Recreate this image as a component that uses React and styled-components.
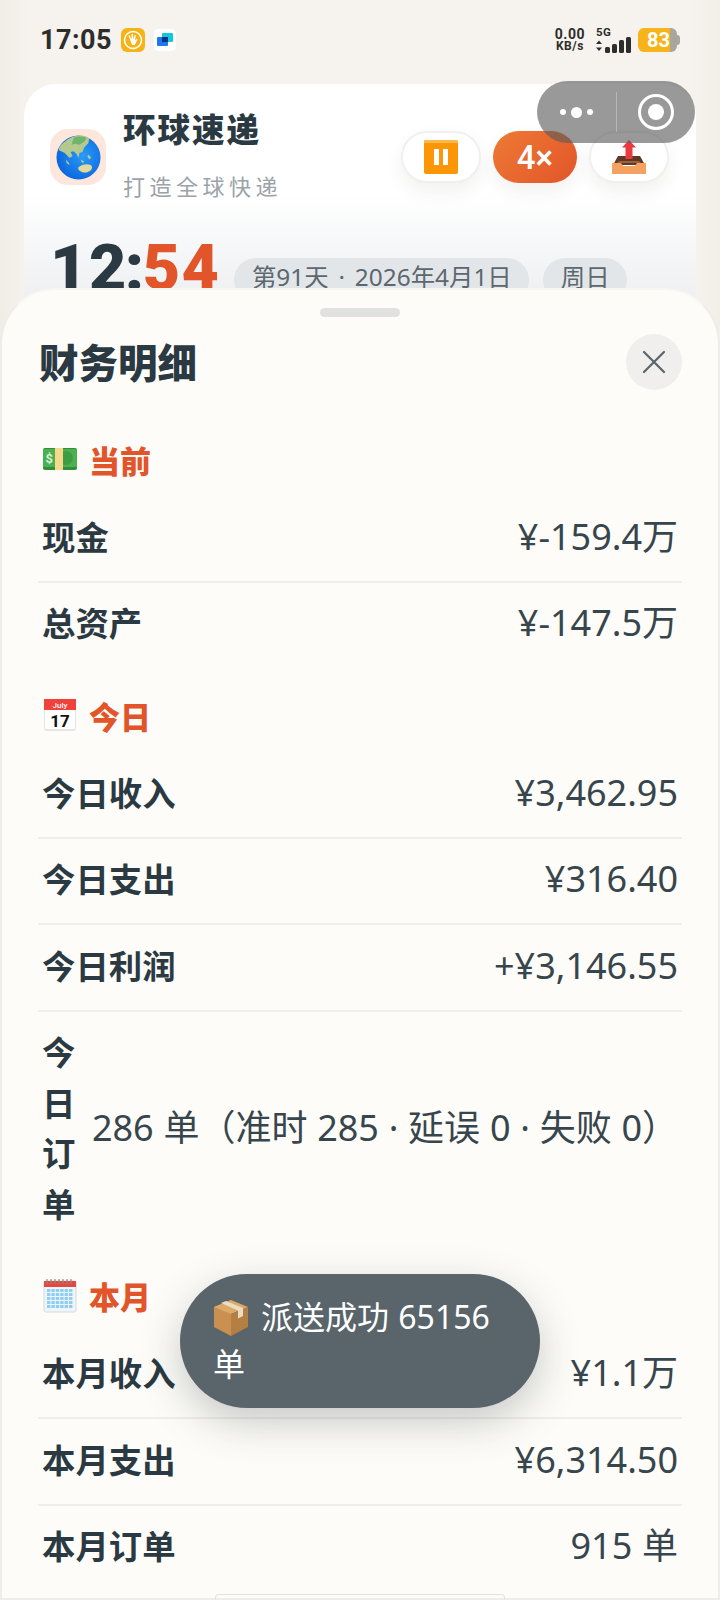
import React from "react";
import styled, { createGlobalStyle } from "styled-components";

const FONT = `"Noto Sans", "Noto Sans CJK SC", sans-serif`;

const Global = createGlobalStyle`
  html, body { margin: 0; padding: 0; background: #f5f2ec; }
  * { box-sizing: border-box; }
`;

const Page = styled.div`
  position: relative;
  width: 720px;
  height: 1600px;
  overflow: hidden;
  font-family: ${FONT};
  background: linear-gradient(90deg, #f0ede7 0, #f6f3ee 30px, #f6f3ee 690px, #f2efe9 100%);
  color: #2b3a42;
`;

const StatusBar = styled.div`
  height: 84px;
  padding: 24px 40px 0 40px;
  display: flex;
  justify-content: space-between;
  align-items: flex-start;
`;
const StatusLeft = styled.div`
  display: flex;
  align-items: center;
  gap: 9px;
  height: 32px;
`;
const Clock = styled.span`
  font-family: "Roboto", sans-serif;
  font-weight: 700;
  font-size: 27px;
  letter-spacing: 0.5px;
  color: #2d2d2b;
`;
const StatusRight = styled.div`
  display: flex;
  align-items: center;
  height: 32px;
`;
const Speed = styled.div`
  font-family: "Roboto", sans-serif;
  font-weight: 700;
  font-size: 12px;
  line-height: 12.5px;
  text-align: center;
  color: #2d2d2b;
  margin-right: 11px;
  letter-spacing: 0.5px;
  span { display: block; }
  span:first-child { font-size: 14px; }
`;
const Net = styled.div`
  display: flex;
  flex-direction: column;
  font-family: "Roboto", sans-serif;
  font-weight: 700;
  font-size: 11.5px;
  line-height: 9px;
  letter-spacing: 0.4px;
  color: #2d2d2b;
  margin-right: 7px;
`;
const Battery = styled.div`
  position: relative;
  width: 39px;
  height: 24px;
  border-radius: 6px;
  margin-right: 3px;
  background: linear-gradient(90deg, #f6b41a 0 32px, #a9a69f 32px);
  color: #fff;
  font-family: "Roboto", sans-serif;
  font-weight: 700;
  font-size: 20px;
  line-height: 24px;
  padding-left: 9px;
  &::after {
    content: "";
    position: absolute;
    right: -3px;
    top: 7px;
    width: 3px;
    height: 10px;
    border-radius: 0 3px 3px 0;
    background: #a9a69f;
  }
`;

const Card = styled.div`
  margin: 0 24px;
  height: 320px;
  border-radius: 32px 32px 0 0;
  background: linear-gradient(180deg, #fff 0, #fff 110px, #eef0f2 210px);
  padding: 22px 26px 0;
`;
const CardHead = styled.div`
  display: flex;
  align-items: flex-start;
`;
const Logo = styled.div`
  width: 56px;
  height: 56px;
  border-radius: 18px;
  background: #fde6db;
  display: flex;
  align-items: center;
  justify-content: center;
  margin-top: 23px;
`;
const Brand = styled.div`
  margin-left: 17px;
  flex: 1;
`;
const BrandName = styled.div`
  font-size: 32.5px;
  font-weight: 900;
  letter-spacing: 2px;
  line-height: 48px;
  color: #2b3a42;
`;
const BrandSub = styled.div`
  font-size: 22px;
  letter-spacing: 4.5px;
  line-height: 32px;
  margin-top: 16px;
  color: #9aa3a8;
`;
const Controls = styled.div`
  display: flex;
  gap: 12px;
  margin: 25px 1px 0 0;
`;
const Ctrl = styled.div`
  width: ${(p) => p.$w}px;
  height: 52px;
  border-radius: 26px;
  display: flex;
  align-items: center;
  justify-content: center;
  color: #fff;
  font-family: "Roboto", sans-serif;
  font-size: 33px;
  font-weight: 500;
  background: ${(p) => (p.$on ? "linear-gradient(135deg, #ee7a34, #e2552a)" : "#fff")};
  border: ${(p) => (p.$on ? "none" : "2px solid #f1f0ee")};
  box-shadow: 0 8px 18px rgba(60, 50, 40, 0.07);
`;
const Capsule = styled.div`
  position: absolute;
  left: 537px;
  top: 81px;
  width: 158px;
  height: 62px;
  border-radius: 31px;
  background: rgba(90, 90, 90, 0.62);
  display: flex;
  align-items: center;
`;
const CapPart = styled.div`
  flex: 1;
  height: 40px;
  display: flex;
  align-items: center;
  justify-content: center;
  gap: 5px;
  & + & { border-left: 1px solid rgba(255, 255, 255, 0.3); }
`;
const Dot = styled.i`
  width: ${(p) => p.$s}px;
  height: ${(p) => p.$s}px;
  border-radius: 50%;
  background: #fff;
`;
const Target = styled.div`
  width: 36px;
  height: 36px;
  border-radius: 50%;
  border: 3px solid #fff;
  display: flex;
  align-items: center;
  justify-content: center;
  &::after {
    content: "";
    width: 16px;
    height: 16px;
    border-radius: 50%;
    background: #fff;
  }
`;
const TimeRow = styled.div`
  display: flex;
  align-items: flex-start;
  margin-top: 26px;
`;
const BigTime = styled.div`
  font-family: "Roboto", sans-serif;
  font-size: 64.5px;
  font-weight: 900;
  line-height: 80px;
  letter-spacing: 1.5px;
  color: #2b3a42;
`;
const Colon = styled.span`
  margin: 0 -3px;
`;
const Accent = styled.span`
  color: #e2552a;
`;
const Pill = styled.div`
  margin-left: ${(p) => p.$ml}px;
  margin-top: 30px;
  padding: 0 17.5px;
  height: 44px;
  line-height: 38px;
  border-radius: 22px;
  background: #e3e6e9;
  font-size: 24.4px;
  word-spacing: 3.5px;
  color: #5c676e;
  white-space: nowrap;
`;

const Sheet = styled.div`
  position: absolute;
  left: 0;
  right: 0;
  top: 288px;
  bottom: 0;
  border-radius: 56px 56px 0 0;
  background: #fdfcf8;
  border: 2px solid #eeedea;
  border-top-color: #f8f6f1;
  padding: 18px 36px 0;
`;
const Handle = styled.div`
  width: 80px;
  height: 9px;
  border-radius: 5px;
  background: #e1e1e2;
  margin: 0 auto;
`;
const SheetHead = styled.div`
  display: flex;
  align-items: center;
  justify-content: space-between;
  margin-top: 17px;
  height: 56px;
`;
const SheetTitle = styled.div`
  font-size: 39.5px;
  font-weight: 900;
  color: #2b3a42;
  padding: 0 0 3px 1px;
`;
const Close = styled.div`
  width: 56px;
  height: 56px;
  border-radius: 50%;
  background: #f0efed;
  display: flex;
  align-items: center;
  justify-content: center;
`;
const Section = styled.section`
  padding-top: ${(p) => (p.$first ? 48 : 25)}px;
`;
const SectionHead = styled.div`
  display: flex;
  align-items: center;
  gap: 12px;
  height: 42px;
  padding-left: 5px;
  margin-bottom: 16px;
  font-size: 31px;
  font-weight: 900;
  color: #e2552a;
`;
const SectionIcon = styled.span`
  width: 34px;
  display: flex;
  justify-content: center;
`;
const Row = styled.div`
  display: flex;
  align-items: center;
  justify-content: space-between;
  gap: 16px;
  padding: 15.5px 4px 18.5px;
  border-bottom: 2px solid ${(p) => (p.$last ? "transparent" : "#efeeea")};
`;
const Label = styled.div`
  font-size: 33.4px;
  font-weight: 700;
  line-height: 50.5px;
  color: #2b3a42;
`;
const Value = styled.div`
  font-size: 36px;
  line-height: 50px;
  word-spacing: 0.4px;
  white-space: nowrap;
  color: #37454d;
`;
const Toast = styled.div`
  position: absolute;
  left: 180px;
  top: 1274px;
  width: 360px;
  height: 134px;
  border-radius: 67px;
  background: #59646b;
  color: #fff;
  font-size: 32px;
  line-height: 47px;
  word-spacing: 1px;
  padding: 19px 33px;
  box-shadow: 0 14px 40px rgba(40, 50, 55, 0.25);
  svg { vertical-align: -7px; margin-right: 12px; }
`;
const HomeBar = styled.div`
  position: absolute;
  left: 215px;
  bottom: 0;
  width: 290px;
  height: 6px;
  border: 1px solid #e4e3e0;
  border-bottom: none;
  border-radius: 4px 4px 0 0;
`;

const Globe = ({ size = 45 }) => (
  <svg width={size} height={size} viewBox="0 0 46 46">
    <defs>
      <radialGradient id="g" cx="60%" cy="45%" r="65%">
        <stop offset="0" stopColor="#2a9bf8" />
        <stop offset="1" stopColor="#0a62dc" />
      </radialGradient>
    </defs>
    <circle cx="23" cy="23" r="22.5" fill="url(#g)" />
    <path d="M9 7c4-4 10-6.500 16-6.500 4 0 7 1 9 3l-1 5-4 4-2 5-3 1-1 5-2-4-3-3-3 1 2 4-3 2-5-5-6-3C3 12 6 9 9 7z" fill="#b4c98e" />
    <path d="M18 3c4-2 9-2 13 0l-2 4-5 3-4-1-4 1z" fill="#6fb36c" />
    <path d="M23 33c3-2.500 8-4 12-2.500 2 1 2.500 3 1 5-2 2.500-6 3.500-9 2.500-3-1-5-3-4-5z" fill="#e2d99b" />
    <path d="M33 20l3 3-2 2-2-3zM25 25l4 2-2 2zM10 25l3 3 1 3-3-2z" fill="#a5cf93" />
  </svg>
);

const PauseIcon = () => (
  <svg width="34" height="34" viewBox="0 0 34 34">
    <rect width="34" height="34" rx="2" fill="#fb9606" />
    <path d="M0 2a2 2 0 012-2h30a2 2 0 012 2v1H0z" fill="#ffb84a" />
    <rect x="10" y="9" width="5" height="16" fill="#fff" />
    <rect x="19" y="9" width="5" height="16" fill="#fff" />
  </svg>
);

const TrayIcon = () => (
  <svg width="34" height="34" viewBox="0 0 34 34">
    <path d="M6 16h22l5 9H1z" fill="#5e3a26" />
    <path d="M0 23h9l2 3h12l2-3h9v11H0z" fill="#f3a261" />
    <path d="M7 21h20l2 2H5z" fill="#9a6238" />
    <path d="M17 0l7 7.500h-3.500V19h-7V7.500H10z" fill="#ea3a3d" />
  </svg>
);

const X = () => (
  <svg width="24" height="24" viewBox="0 0 24 24" fill="none" stroke="#59646b" strokeWidth="2.2" strokeLinecap="round">
    <path d="M2 2l20 20M22 2L2 22" />
  </svg>
);

const Money = () => (
  <svg width="34" height="22" viewBox="0 0 34 22">
    <rect width="34" height="22" rx="2" fill="#2f8f3c" />
    <rect y="1" width="34" height="18" fill="#4caf50" />
    <circle cx="23" cy="10" r="7" fill="#3d9d45" />
    <rect x="12" width="8" height="22" fill="#f4d98d" />
    <text x="2.500" y="15" fontSize="13" fontWeight="700" fill="#d7f2d0" fontFamily="Roboto, sans-serif">$</text>
  </svg>
);

const Cal17 = () => (
  <svg width="32" height="32" viewBox="0 0 32 32">
    <rect width="32" height="32" rx="2" fill="#e6e6e6" />
    <rect x="1" y="1" width="30" height="29" fill="#fff" />
    <rect width="32" height="11" fill="#f0413a" />
    <text x="16" y="9" fontSize="8" fontWeight="500" textAnchor="middle" fill="#fff" fontFamily="Roboto, sans-serif">July</text>
    <text x="16" y="28" fontSize="17" fontWeight="700" textAnchor="middle" fill="#111" fontFamily="Roboto, sans-serif">17</text>
  </svg>
);

const Grid = () => {
  const cells = [];
  for (let r = 0; r < 5; r++) for (let c = 0; c < 6; c++) cells.push(<rect key={`${r}-${c}`} x={4 + c * 4.4} y={10 + r * 4} width="3.4" height="3" fill="#8fcdf3" />);
  return (
    <svg width="34" height="34" viewBox="0 0 34 34">
      <rect x="1" y="2" width="32" height="31" rx="2" fill="#eef6fb" stroke="#d4dadd" />
      <rect x="1" y="2" width="32" height="6" fill="#e4483f" />
      <path d="M4 0v5M8 0v5M12 0v5M16 0v5M20 0v5M24 0v5M28 0v5" stroke="#8a8a8a" strokeWidth="1.2" />
      {cells}
    </svg>
  );
};

const Box = () => (
  <svg width="36" height="36" viewBox="0 0 36 36">
    <path d="M18 0L1 7v20l17 9z" fill="#c99050" />
    <path d="M1 7l17 7 17-7-17-7z" fill="#dca968" />
    <path d="M18 14v22l17-9V7z" fill="#b57f43" />
    <path d="M8 3l17 7.500v8l5-2.500V8L13 1z" fill="#ecdcc4" />
  </svg>
);

const HandBadge = () => (
  <svg width="24" height="24" viewBox="0 0 24 24">
    <rect width="24" height="24" rx="6" fill="#f6b316" />
    <circle cx="12" cy="12" r="8.500" fill="none" stroke="#fff" strokeWidth="1.5" />
    <path d="M8.500 7l2 4.500.2-5.500h1.200l.6 5 1.300-4 1 .3-.8 5 1.800-1.500.7.700-2.600 5.500h-2.800L7.500 7.500z" fill="#fff" />
  </svg>
);
const ChatBadge = () => (
  <svg width="22" height="22" viewBox="0 0 22 22">
    <rect width="22" height="22" rx="5" fill="#fff" />
    <rect x="8" y="4" width="11" height="9" rx="1" fill="#14c8dc" />
    <rect x="3" y="8" width="11" height="9" rx="1" fill="#1c78ee" />
    <rect x="8" y="8" width="6" height="5" fill="#0b2f8a" />
  </svg>
);
const Signal = () => (
  <svg width="35" height="16" viewBox="0 0 35 16">
    <path d="M3 3.500l3 3.500H0zM3 14l3-3.500H0z" fill="#2d2d2b" />
    <rect x="9" y="10" width="5" height="6" rx="1.500" fill="#2d2d2b" />
    <rect x="16" y="7" width="5" height="9" rx="1.500" fill="#2d2d2b" />
    <rect x="23" y="3" width="5" height="13" rx="1.500" fill="#2d2d2b" />
    <rect x="30" y="0" width="5" height="16" rx="1.500" fill="#2d2d2b" />
  </svg>
);

const sections = [
  { icon: <Money />, title: "当前", rows: [["现金", "¥-159.4万"], ["总资产", "¥-147.5万"]] },
  {
    icon: <Cal17 />,
    title: "今日",
    rows: [
      ["今日收入", "¥3,462.95"],
      ["今日支出", "¥316.40"],
      ["今日利润", "+¥3,146.55"],
      ["今日订单", "286 单（准时 285 · 延误 0 · 失败 0）"],
    ],
  },
  { icon: <Grid />, title: "本月", rows: [["本月收入", "¥1.1万"], ["本月支出", "¥6,314.50"], ["本月订单", "915 单"]] },
];

export default function App() {
  return (
    <Page>
      <Global />
      <StatusBar>
        <StatusLeft>
          <Clock>17:05</Clock>
          <HandBadge />
          <ChatBadge />
        </StatusLeft>
        <StatusRight>
          <Speed>
            <span>0.00</span>
            <span>KB/s</span>
          </Speed>
          <Net>
            5G
            <Signal />
          </Net>
          <Battery>83</Battery>
        </StatusRight>
      </StatusBar>
      <Card>
        <CardHead>
          <Logo>
            <Globe />
          </Logo>
          <Brand>
            <BrandName>环球速递</BrandName>
            <BrandSub>打造全球快递</BrandSub>
          </Brand>
          <Controls>
            <Ctrl $w={80}>
              <PauseIcon />
            </Ctrl>
            <Ctrl $w={84} $on>
              4×
            </Ctrl>
            <Ctrl $w={80}>
              <TrayIcon />
            </Ctrl>
          </Controls>
        </CardHead>
        <TimeRow>
          <BigTime>
            12<Colon>:</Colon>
            <Accent>54</Accent>
          </BigTime>
          <Pill $ml={14}>第91天 · 2026年4月1日</Pill>
          <Pill $ml={14}>周日</Pill>
        </TimeRow>
      </Card>
      <Capsule>
        <CapPart>
          <Dot $s={6} />
          <Dot $s={11} />
          <Dot $s={6} />
        </CapPart>
        <CapPart>
          <Target />
        </CapPart>
      </Capsule>
      <Sheet>
        <Handle />
        <SheetHead>
          <SheetTitle>财务明细</SheetTitle>
          <Close>
            <X />
          </Close>
        </SheetHead>
        {sections.map((s, i) => (
          <Section key={s.title} $first={i === 0}>
            <SectionHead>
              <SectionIcon>{s.icon}</SectionIcon>
              {s.title}
            </SectionHead>
            {s.rows.map(([k, v], j) => (
              <Row key={k} $last={j === s.rows.length - 1}>
                <Label>{k}</Label>
                <Value>{v}</Value>
              </Row>
            ))}
          </Section>
        ))}
      </Sheet>
      <Toast>
        <Box />
        派送成功 65156 单
      </Toast>
      <HomeBar />
    </Page>
  );
}
